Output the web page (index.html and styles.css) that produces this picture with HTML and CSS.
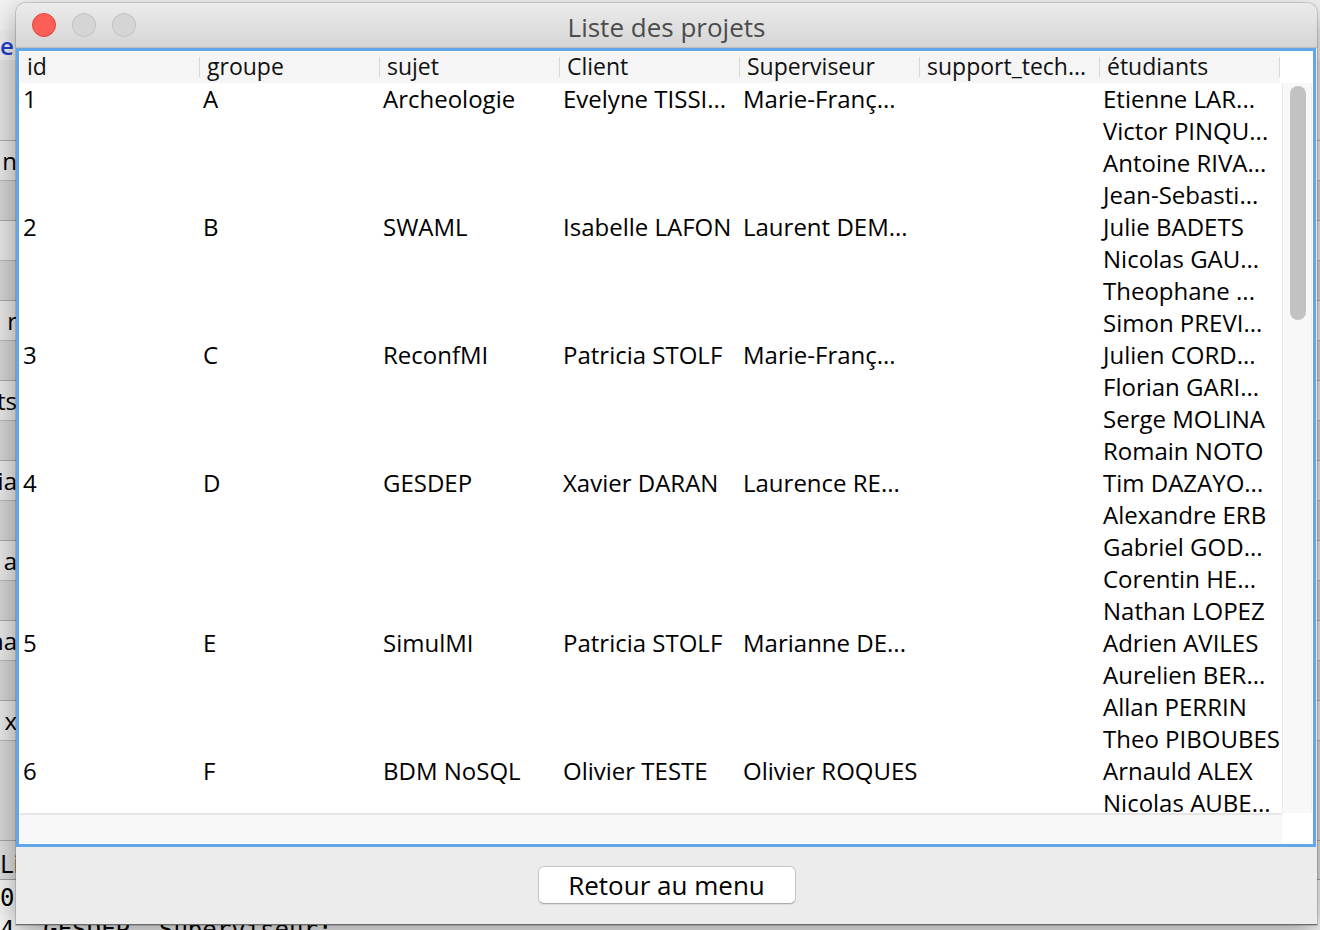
FILE: index.html
```html
<!DOCTYPE html>
<html lang="fr">
<head>
<meta charset="utf-8">
<title>Liste des projets</title>
<link rel="stylesheet" href="styles.css">
</head>
<body>
<div class="desktop">
  <div class="bg-row bg-top"></div>
  <div class="bg-row bg-link"><span class="clip">e</span></div>
  <div class="bg-row bg-plain"></div>
  <div class="bg-row bg-text"><span class="clip">n</span></div>
  <div class="bg-row bg-blank"></div>
  <div class="bg-row bg-text"></div>
  <div class="bg-row bg-blank"></div>
  <div class="bg-row bg-text"><span class="clip">r</span></div>
  <div class="bg-row bg-blank"></div>
  <div class="bg-row bg-text"><span class="clip">ts</span></div>
  <div class="bg-row bg-blank"></div>
  <div class="bg-row bg-text"><span class="clip">ia</span></div>
  <div class="bg-row bg-blank"></div>
  <div class="bg-row bg-text"><span class="clip">a</span></div>
  <div class="bg-row bg-blank"></div>
  <div class="bg-row bg-text"><span class="clip">na</span></div>
  <div class="bg-row bg-blank"></div>
  <div class="bg-row bg-text"><span class="clip">x</span></div>
  <div class="bg-row bg-big"></div>
  <div class="bg-row bg-li"><span class="clip">Li</span></div>
  <div class="bg-row bg-mono"><span class="clip clip-left">0-</span></div>
  <div class="bg-row bg-mono bg-last"><span>4- GESDEP- Superviseur:</span></div>
</div>

<div class="window">
  <div class="titlebar">
    <div class="lights">
      <span class="light light-close"></span>
      <span class="light light-off"></span>
      <span class="light light-off"></span>
    </div>
    <div class="title">Liste des projets</div>
    <div></div>
  </div>

  <div class="pane">
    <div class="pane-main">
      <div class="table-col">
        <div class="thead">
          <div class="th">id</div>
          <div class="th">groupe</div>
          <div class="th">sujet</div>
          <div class="th">Client</div>
          <div class="th">Superviseur</div>
          <div class="th">support_tech...</div>
          <div class="th">étudiants</div>
        </div>
        <div class="tbody">
          <div class="tgrid">
            <div class="td">1</div>
            <div class="td">A</div>
            <div class="td">Archeologie</div>
            <div class="td">Evelyne TISSI...</div>
            <div class="td">Marie-Franç...</div>
            <div class="td"></div>
            <div class="td">
              <div>Etienne LAR...</div>
              <div>Victor PINQU...</div>
              <div>Antoine RIVA...</div>
              <div>Jean-Sebasti...</div>
            </div>

            <div class="td">2</div>
            <div class="td">B</div>
            <div class="td">SWAML</div>
            <div class="td">Isabelle LAFON</div>
            <div class="td">Laurent DEM...</div>
            <div class="td"></div>
            <div class="td">
              <div>Julie BADETS</div>
              <div>Nicolas GAU...</div>
              <div>Theophane ...</div>
              <div>Simon PREVI...</div>
            </div>

            <div class="td">3</div>
            <div class="td">C</div>
            <div class="td">ReconfMI</div>
            <div class="td">Patricia STOLF</div>
            <div class="td">Marie-Franç...</div>
            <div class="td"></div>
            <div class="td">
              <div>Julien CORD...</div>
              <div>Florian GARI...</div>
              <div>Serge MOLINA</div>
              <div>Romain NOTO</div>
            </div>

            <div class="td">4</div>
            <div class="td">D</div>
            <div class="td">GESDEP</div>
            <div class="td">Xavier DARAN</div>
            <div class="td">Laurence RE...</div>
            <div class="td"></div>
            <div class="td">
              <div>Tim DAZAYO...</div>
              <div>Alexandre ERB</div>
              <div>Gabriel GOD...</div>
              <div>Corentin HE...</div>
              <div>Nathan LOPEZ</div>
            </div>

            <div class="td">5</div>
            <div class="td">E</div>
            <div class="td">SimulMI</div>
            <div class="td">Patricia STOLF</div>
            <div class="td">Marianne DE...</div>
            <div class="td"></div>
            <div class="td">
              <div>Adrien AVILES</div>
              <div>Aurelien BER...</div>
              <div>Allan PERRIN</div>
              <div>Theo PIBOUBES</div>
            </div>

            <div class="td">6</div>
            <div class="td">F</div>
            <div class="td">BDM NoSQL</div>
            <div class="td">Olivier TESTE</div>
            <div class="td">Olivier ROQUES</div>
            <div class="td"></div>
            <div class="td">
              <div>Arnauld ALEX</div>
              <div>Nicolas AUBE...</div>
            </div>
          </div>
        </div>
      </div>
      <div class="vscroll-col">
        <div class="vscroll-head"></div>
        <div class="vtrack"><div class="vthumb"></div></div>
      </div>
    </div>
    <div class="pane-bottom">
      <div class="htrack"></div>
      <div class="corner"></div>
    </div>
  </div>

  <div class="footer">
    <button class="btn" type="button">Retour au menu</button>
  </div>
</div>
</body>
</html>
```

FILE: styles.css
```css
html, body {
  margin: 0;
  padding: 0;
}

body {
  width: 1320px;
  height: 930px;
  overflow: hidden;
  position: relative;
  background: #e4e4e4;
  font-family: "Open Sans", "DejaVu Sans", sans-serif;
  color: #000;
}

/* ---------- background (other app behind the window) ---------- */
.desktop {
  display: flex;
  flex-direction: column;
  width: 1320px;
  height: 930px;
}

.bg-row {
  flex: none;
  display: flex;
  align-items: center;
  white-space: nowrap;
  overflow: hidden;
  font-size: 24px;
  box-sizing: border-box;
}

.bg-row span {
  display: block;
}

/* only the right end of the words shows beside the window */
.bg-row .clip {
  width: 17px;
  overflow: hidden;
  display: flex;
  justify-content: flex-end;
}

.bg-row .clip-left {
  justify-content: flex-start;
}

.bg-top {
  height: 30px;
  background: #f1f1f1;
}

.bg-link {
  height: 30px;
  background: #ededed;
  color: #1f3fcc;
  font-weight: 600;
}

.bg-link .clip {
  justify-content: flex-start;
}

.bg-plain {
  height: 81px;
  background: #e2e2e2;
  border-bottom: 1px solid #aaaaaa;
}

.bg-text {
  height: 40px;
  background: #e6e6e6;
  border-bottom: 1px solid #b3b3b3;
}

.bg-blank {
  height: 40px;
  background: #d3d3d3;
  border-bottom: 1px solid #a8a8a8;
}

.bg-big {
  height: 100px;
  background: #d6d6d6;
  border-bottom: 1px solid #a6a6a6;
}

.bg-li {
  height: 39px;
  background: #dcdcdc;
  font-size: 26px;
  border-bottom: 1px solid #a0a0a0;
  padding-top: 6px;
}

.bg-li .clip {
  justify-content: flex-start;
}

.bg-mono {
  height: 35px;
  background: #f2f2f2;
  font-family: "DejaVu Sans Mono", "Liberation Mono", monospace;
  font-size: 24px;
}

.bg-last {
  height: 40px;
  align-items: flex-start;
  padding-top: 1px;
  background: #f6f6f6;
}

/* ---------- window ---------- */
.window {
  position: absolute;
  left: 16px;
  top: 3px;
  width: 1301px;
  display: flex;
  flex-direction: column;
  background: #ececec;
  border-radius: 10px 10px 0 0;
  overflow: hidden;
  box-shadow: 0 0 0 1px rgba(0, 0, 0, 0.14), 0 10px 28px rgba(0, 0, 0, 0.35);
}

.titlebar {
  height: 44px;
  border-bottom: 1px solid #bcbcbc;
  background: linear-gradient(#ebebeb, #d5d5d5);
  display: grid;
  grid-template-columns: 1fr auto 1fr;
  align-items: center;
}

.lights {
  display: flex;
  gap: 16px;
  padding-left: 16px;
}

.light {
  width: 22px;
  height: 22px;
  border-radius: 50%;
  display: block;
}

.light-close {
  background: #fc5f57;
  border: 1px solid #e0463f;
}

.light-off {
  background: #d5d5d5;
  border: 1px solid #c1c1c1;
}

.title {
  font-size: 26px;
  color: #4c4c4c;
  line-height: 32px;
  padding-top: 3px;
}

/* ---------- scroll pane with table ---------- */
.pane {
  width: 1300px;
  height: 799px;
  box-sizing: border-box;
  border: 3px solid #62a6ea;
  padding: 1px;
  background: #ffffff;
  display: flex;
  flex-direction: column;
}

.pane-main {
  display: flex;
  height: 761px;
}

.table-col {
  width: 1262px;
  display: flex;
  flex-direction: column;
}

.thead {
  display: grid;
  grid-template-columns: repeat(7, 180px);
  height: 31px;
  background: linear-gradient(#f5f5f5, #f5f5f5) no-repeat left top / 1260px 31px;
}

.th {
  font-size: 23px;
  line-height: 28px;
  height: 31px;
  padding-left: 7px;
  white-space: nowrap;
  color: #111;
  background: linear-gradient(#d8d8d8, #d8d8d8) no-repeat right 5px / 1px 20px;
}

.tbody {
  height: 730px;
  overflow: hidden;
}

.tgrid {
  display: grid;
  grid-template-columns: repeat(7, 180px);
  align-items: start;
}

.td {
  font-size: 24px;
  line-height: 32px;
  padding-left: 3px;
  white-space: nowrap;
  overflow: hidden;
  min-height: 32px;
}

.vscroll-col {
  width: 30px;
  display: flex;
  flex-direction: column;
}

.vscroll-head {
  height: 31px;
}

.vtrack {
  flex: 1;
  background: #f8f8f8;
  border-left: 1px solid #eaeaea;
  border-right: 1px solid #ededed;
  padding: 3px 6px 0 7px;
}

.vthumb {
  width: 16px;
  height: 234px;
  border-radius: 8px;
  background: #c2c2c2;
}

.pane-bottom {
  display: flex;
  height: 30px;
}

.htrack {
  width: 1262px;
  box-sizing: border-box;
  border-top: 2px solid #e6e6e6;
  background: #f8f8f8;
}

.corner {
  flex: 1;
  background: #ffffff;
}

/* ---------- footer ---------- */
.footer {
  height: 78px;
  box-sizing: border-box;
  padding-top: 19px;
  display: flex;
  justify-content: center;
  align-items: flex-start;
  background: #ececec;
  border-bottom: 1px solid #6b6b6b;
}

.btn {
  width: 258px;
  height: 38px;
  margin: 0;
  padding: 0;
  box-sizing: border-box;
  background: #ffffff;
  border: 1px solid #c6c6c6;
  border-bottom-color: #acacac;
  border-radius: 6px;
  box-shadow: 0 1px 1px rgba(0, 0, 0, 0.08);
  font-family: "Open Sans", "DejaVu Sans", sans-serif;
  font-size: 26px;
  line-height: 34px;
  color: #000;
}
```
